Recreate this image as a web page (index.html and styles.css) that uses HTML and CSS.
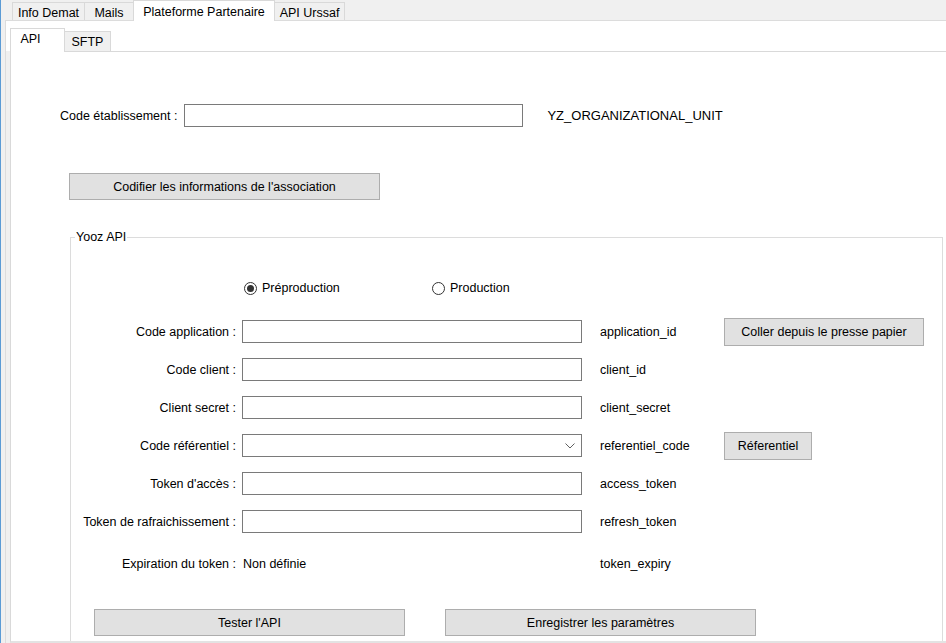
FILE: index.html
```html
<!DOCTYPE html>
<html lang="fr">
<head>
<meta charset="utf-8">
<title>Plateforme Partenaire</title>
<link rel="stylesheet" href="styles.css">
</head>
<body>
<div class="window">
  <div class="tabstrip outer-strip">
    <div class="tab t-info">Info Demat</div>
    <div class="tab t-mails">Mails</div>
    <div class="tab t-plat active">Plateforme Partenaire</div>
    <div class="tab t-urssaf">API Urssaf</div>
  </div>
  <div class="outer-panel">
    <div class="tabstrip inner-strip">
      <div class="tab t-api active">API</div>
      <div class="tab t-sftp">SFTP</div>
    </div>
    <div class="inner-panel">
      <div class="code-row">
        <span class="label code-label">Code établissement :</span>
        <div class="textbox code-box"></div>
        <span class="unit-id">YZ_ORGANIZATIONAL_UNIT</span>
      </div>
      <div class="codify-row">
        <div class="btn btn-codify">Codifier les informations de l'association</div>
      </div>
      <fieldset class="group">
        <legend class="group-title">Yooz API</legend>
        <div class="radios">
          <label class="radio"><span class="radio-dot checked"></span>Préproduction</label>
          <label class="radio"><span class="radio-dot"></span>Production</label>
        </div>
        <div class="form-grid">
          <span class="label">Code application :</span>
          <div class="textbox"></div>
          <span class="id">application_id</span>
          <div class="btn btn-paste">Coller depuis le presse papier</div>

          <span class="label">Code client :</span>
          <div class="textbox"></div>
          <span class="id">client_id</span>
          <span></span>

          <span class="label">Client secret :</span>
          <div class="textbox"></div>
          <span class="id">client_secret</span>
          <span></span>

          <span class="label">Code référentiel :</span>
          <div class="textbox combo">
            <svg class="chevron" width="10" height="6" viewBox="0 0 10 6"><path d="M0.5 0.5 L5 5 L9.5 0.5" fill="none" stroke="#606060" stroke-width="1"/></svg>
          </div>
          <span class="id">referentiel_code</span>
          <div class="btn btn-ref">Réferentiel</div>

          <span class="label">Token d'accès :</span>
          <div class="textbox"></div>
          <span class="id">access_token</span>
          <span></span>

          <span class="label">Token de rafraichissement :</span>
          <div class="textbox"></div>
          <span class="id">refresh_token</span>
          <span></span>

          <span class="label">Expiration du token :</span>
          <span class="value">Non définie</span>
          <span class="id">token_expiry</span>
          <span></span>
        </div>
        <div class="actions">
          <div class="btn btn-wide">Tester l'API</div>
          <div class="btn btn-wide">Enregistrer les paramètres</div>
        </div>
      </fieldset>
    </div>
  </div>
</div>
</body>
</html>
```
FILE: styles.css
```css
* { box-sizing: border-box; }
html, body { margin: 0; padding: 0; }
body {
  width: 946px;
  height: 643px;
  overflow: hidden;
  background: #f0f0f0;
  font-family: "Liberation Sans", Arial, sans-serif;
  font-size: 12.5px;
  color: #000;
}
.window {
  height: 643px;
  border-left: 1px solid #5b9bd5;
  padding-left: 4px;
  display: flex;
  flex-direction: column;
}
.tabstrip {
  display: flex;
  align-items: flex-end;
  position: relative;
  z-index: 1;
  flex: none;
}
.tab {
  border: 1px solid #d9d9d9;
  border-bottom: none;
  background: #f0f0f0;
  display: flex;
  align-items: center;
  justify-content: center;
  white-space: nowrap;
  margin-left: -1px;
}
.tab.active {
  background: #fff;
  margin-bottom: -1px;
}
/* outer tabs */
.outer-strip {
  height: 20px;
  padding-left: 8px;
}
.outer-strip .tab { height: 18px; padding-top: 3px; }
.outer-strip .tab.active { height: 21px; padding-top: 1px; padding-bottom: 0; }
.t-info { width: 73px; }
.t-mails { width: 50px; }
.t-plat { width: 142px; }
.t-urssaf { width: 71px; }
.outer-panel {
  flex: 1;
  border: 1px solid #dcdcdc;
  border-right: none;
  border-bottom: none;
  background: #f0f0f0;
  padding: 0 0 0 4px;
  display: flex;
  flex-direction: column;
  min-height: 0;
}
/* inner tabs */
.inner-strip {
  height: 30px;
  background: #fff;
  margin-left: -4px;
  padding-left: 5px;
}
.inner-strip .tab { height: 20px; padding-top: 1px; }
.inner-strip .tab.active { height: 24px; padding-bottom: 4px; padding-right: 14px; }
.t-api { width: 55px; }
.t-sftp { width: 47px; }
.inner-panel {
  flex: 1;
  min-height: 0;
  border: 1px solid #d9d9d9;
  border-right: none;
  border-bottom: 2px solid #e3e3e3;
  background: #fff;
  overflow: hidden;
}
.label { white-space: nowrap; }
.code-row {
  display: flex;
  align-items: center;
  height: 23px;
  margin-top: 52px;
  padding-left: 49px;
}
.code-box {
  width: 339px;
  margin-left: 7px;
}
.textbox {
  height: 23px;
  border: 1px solid #7a7a7a;
  background: #fff;
}
.unit-id {
  margin-left: 24px;
  font-size: 13px;
}
.codify-row {
  margin-top: 46px;
  padding-left: 58px;
}
.btn {
  display: flex;
  align-items: center;
  justify-content: center;
  background: #e1e1e1;
  border: 1px solid #adadad;
  white-space: nowrap;
}
.btn-codify {
  width: 311px;
  height: 27px;
}
.group {
  margin: 30px 0 0 59px;
  border: 1px solid #dcdcdc;
  width: 873px;
  padding: 0 0 40px 0;
  min-width: 0;
}
.group-title {
  margin-left: 4px;
  padding: 0 1px;
  line-height: 14px;
}
.radios {
  display: flex;
  margin-top: 37px;
  padding-left: 173px;
  height: 14px;
  align-items: center;
}
.radio {
  display: flex;
  align-items: center;
  gap: 5px;
  width: 188px;
}
.radio-dot {
  width: 13px;
  height: 13px;
  border-radius: 50%;
  border: 1px solid #333;
  background: #fff;
  display: flex;
  align-items: center;
  justify-content: center;
}
.radio-dot.checked::after {
  content: "";
  width: 7px;
  height: 7px;
  border-radius: 50%;
  background: #333;
}
.form-grid {
  display: grid;
  grid-template-columns: 165px 340px 124px auto;
  grid-template-rows: repeat(6, 23px) 32px;
  column-gap: 6px;
  row-gap: 15px;
  margin-top: 25px;
  align-items: center;
}
.form-grid > .label { text-align: right; }
.form-grid > .id { margin-left: 12px; }
.form-grid > .value { padding-left: 1px; }
.form-grid > :nth-child(4n) { justify-self: start; margin-left: 6px; }
.combo {
  display: flex;
  align-items: center;
  justify-content: flex-end;
  padding-right: 6px;
}
.btn-paste { width: 200px; height: 28px; }
.btn-ref { width: 88px; height: 28px; }
.actions {
  display: flex;
  gap: 40px;
  margin-top: 29px;
  padding-left: 23px;
  height: 40px;
  align-items: flex-start;
}
.btn-wide {
  width: 311px;
  height: 27px;
}
```
